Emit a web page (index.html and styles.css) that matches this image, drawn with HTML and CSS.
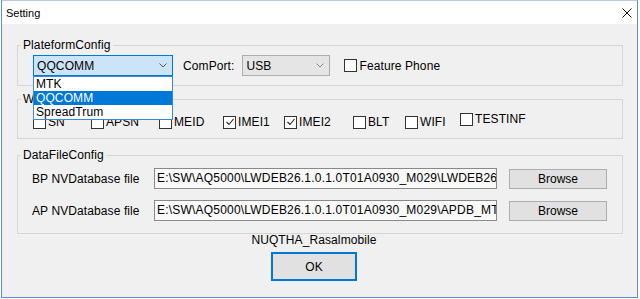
FILE: index.html
```html
<!DOCTYPE html>
<html>
<head>
<meta charset="utf-8">
<title>Setting</title>
<link rel="stylesheet" href="styles.css">
</head>
<body>
<div class="window">
  <div class="titlebar">
    <span class="title">Setting</span>
    <svg class="close" width="10" height="10" viewBox="0 0 10 10"><path d="M0.5 0.5L9.5 9.5M9.5 0.5L0.5 9.5" stroke="#111" stroke-width="1" fill="none"/></svg>
  </div>
  <div class="client">
    <fieldset class="group g1">
      <legend>PlateformConfig</legend>
      <div class="row1">
        <div class="combo-wrap">
          <div class="combo active"><span>QQCOMM</span>
            <svg class="chev" width="8" height="5" viewBox="0 0 8 5"><path d="M0.5 0.5L4 4L7.5 0.5" stroke="#555" fill="none"/></svg>
          </div>
          <ul class="droplist">
            <li>MTK</li>
            <li class="sel">QQCOMM</li>
            <li>SpreadTrum</li>
          </ul>
        </div>
        <span class="comport">ComPort:</span>
        <div class="combo usb"><span>USB</span>
          <svg class="chev" width="8" height="5" viewBox="0 0 8 5"><path d="M0.5 0.5L4 4L7.5 0.5" stroke="#888" fill="none"/></svg>
        </div>
        <label class="chk fp"><span class="box"></span><span>Feature Phone</span></label>
      </div>
    </fieldset>

    <fieldset class="group g2">
      <legend>W</legend>
      <div class="checks">
        <label class="chk"><span class="box"></span><span>SN</span></label>
        <label class="chk"><span class="box"></span><span>APSN</span></label>
        <label class="chk"><span class="box"></span><span>MEID</span></label>
        <label class="chk"><span class="box"><svg width="10" height="10" viewBox="0 0 10 10"><path d="M1.5 5L4 7.5L8.5 2" stroke="#222" stroke-width="1.1" fill="none"/></svg></span><span>IMEI1</span></label>
        <label class="chk"><span class="box"><svg width="10" height="10" viewBox="0 0 10 10"><path d="M1.5 5L4 7.5L8.5 2" stroke="#222" stroke-width="1.1" fill="none"/></svg></span><span>IMEI2</span></label>
        <label class="chk"><span class="box"></span><span>BLT</span></label>
        <label class="chk"><span class="box"></span><span>WIFI</span></label>
        <label class="chk raised"><span class="box"></span><span>TESTINF</span></label>
      </div>
    </fieldset>

    <fieldset class="group g3">
      <legend>DataFileConfig</legend>
      <div class="filerow">
        <span class="flabel">BP NVDatabase file</span>
        <div class="field">E:\SW\AQ5000\LWDEB26.1.0.1.0T01A0930_M029\LWDEB26</div>
        <button class="btn">Browse</button>
      </div>
      <div class="filerow second">
        <span class="flabel">AP NVDatabase file</span>
        <div class="field">E:\SW\AQ5000\LWDEB26.1.0.1.0T01A0930_M029\APDB_MT</div>
        <button class="btn">Browse</button>
      </div>
    </fieldset>

    <div class="footer">
      <div class="credit">NUQTHA_Rasalmobile</div>
      <button class="ok">OK</button>
    </div>
  </div>
</div>
</body>
</html>
```

FILE: styles.css
```css
* { box-sizing: border-box; }
body {
  margin: 0;
  background: #ffffff;
  font-family: "Liberation Sans", Arial, sans-serif;
  font-size: 12px;
  letter-spacing: 0.1px;
  color: #000;
}
.window {
  margin-left: 1px;
  width: 637px;
  height: 298px;
  border: 1px solid #5a8fd6;
  border-top-color: #b8c9e0;
  background: #f0f0f0;
  display: flex;
  flex-direction: column;
}
.titlebar {
  height: 23px;
  background: #ffffff;
  display: flex;
  align-items: center;
  padding-left: 4px;
  flex: none;
}
.title {
  font-size: 11px;
  letter-spacing: 0;
  color: #000;
}
.close {
  margin-left: auto;
  margin-right: 5px;
  display: block;
}
.client {
  flex: 1;
  padding-top: 14px;
  display: flex;
  flex-direction: column;
}
.group {
  margin: 0 14px 0 15px;
  padding: 0;
  border: 1px solid #d5d5d5;
  min-width: 0;
}
.group legend {
  margin-left: 3px;
  padding: 0 2px;
  line-height: 14px;
  height: 14px;
}
.g2 { margin-top: 6px; }
.g3 { margin-top: 9px; }

.row1 {
  display: flex;
  align-items: center;
  padding: 3px 0 9px 15px;
}
.combo-wrap {
  position: relative;
  width: 140px;
}
.combo {
  height: 21px;
  border: 1px solid #adadad;
  display: flex;
  align-items: center;
  padding-left: 3px;
}
.combo .chev {
  margin-left: auto;
  margin-right: 5px;
  display: block;
}
.combo.active {
  width: 140px;
  border-color: #0078d7;
  background: #cce4f7;
}
.droplist {
  position: absolute;
  top: 21px;
  left: 0;
  width: 140px;
  margin: 0;
  padding: 0;
  list-style: none;
  background: #fff;
  border: 1px solid #3f88d6;
  z-index: 2;
}
.droplist li {
  height: 14px;
  line-height: 14px;
  padding-left: 2px;
}
.droplist li.sel {
  background: #0078d7;
  color: #fff;
}
.comport { margin-left: 10px; }
.combo.usb {
  margin-left: 8px;
  width: 88px;
  background: #e5e5e5;
}
.chk {
  display: flex;
  align-items: center;
  height: 14px;
  white-space: nowrap;
}
.box {
  width: 13px;
  height: 13px;
  border: 1px solid #333;
  background: #fff;
  margin-right: 2px;
  display: flex;
  align-items: center;
  justify-content: center;
  flex: none;
}
.box svg { display: block; }
.fp { margin-left: 14px; }

.checks {
  display: grid;
  grid-template-columns: 58px 68px 64px 61px 69px 52px 55px auto;
  align-items: start;
  padding: 9px 0 9px 15px;
}
.chk.raised { margin-top: -3px; }

.filerow {
  display: flex;
  align-items: center;
  padding-left: 14px;
  margin-top: 6px;
}
.filerow.second {
  margin-top: 11px;
  margin-bottom: 12px;
}
.flabel { width: 122px; flex: none; }
.field {
  width: 343px;
  height: 21px;
  flex: none;
  border: 1px solid #8a8a8a;
  background: #f9f9f9;
  line-height: 19px;
  padding-left: 2px;
  letter-spacing: 0.2px;
  overflow: hidden;
  white-space: nowrap;
}
.btn {
  margin-left: 12px;
  width: 98px;
  height: 20px;
  background: #e1e1e1;
  border: 1px solid #adadad;
  font: inherit;
  color: #000;
  padding: 0;
}
.footer {
  display: flex;
  flex-direction: column;
  align-items: center;
  padding-right: 11px;
}
.credit { line-height: 12px; }
.ok {
  margin-top: 6px;
  width: 86px;
  height: 29px;
  background: #e1e1e1;
  border: 1px solid #0078d7;
  box-shadow: inset 0 0 0 1px #0078d7;
  font: inherit;
  color: #000;
  padding: 0;
}
```
